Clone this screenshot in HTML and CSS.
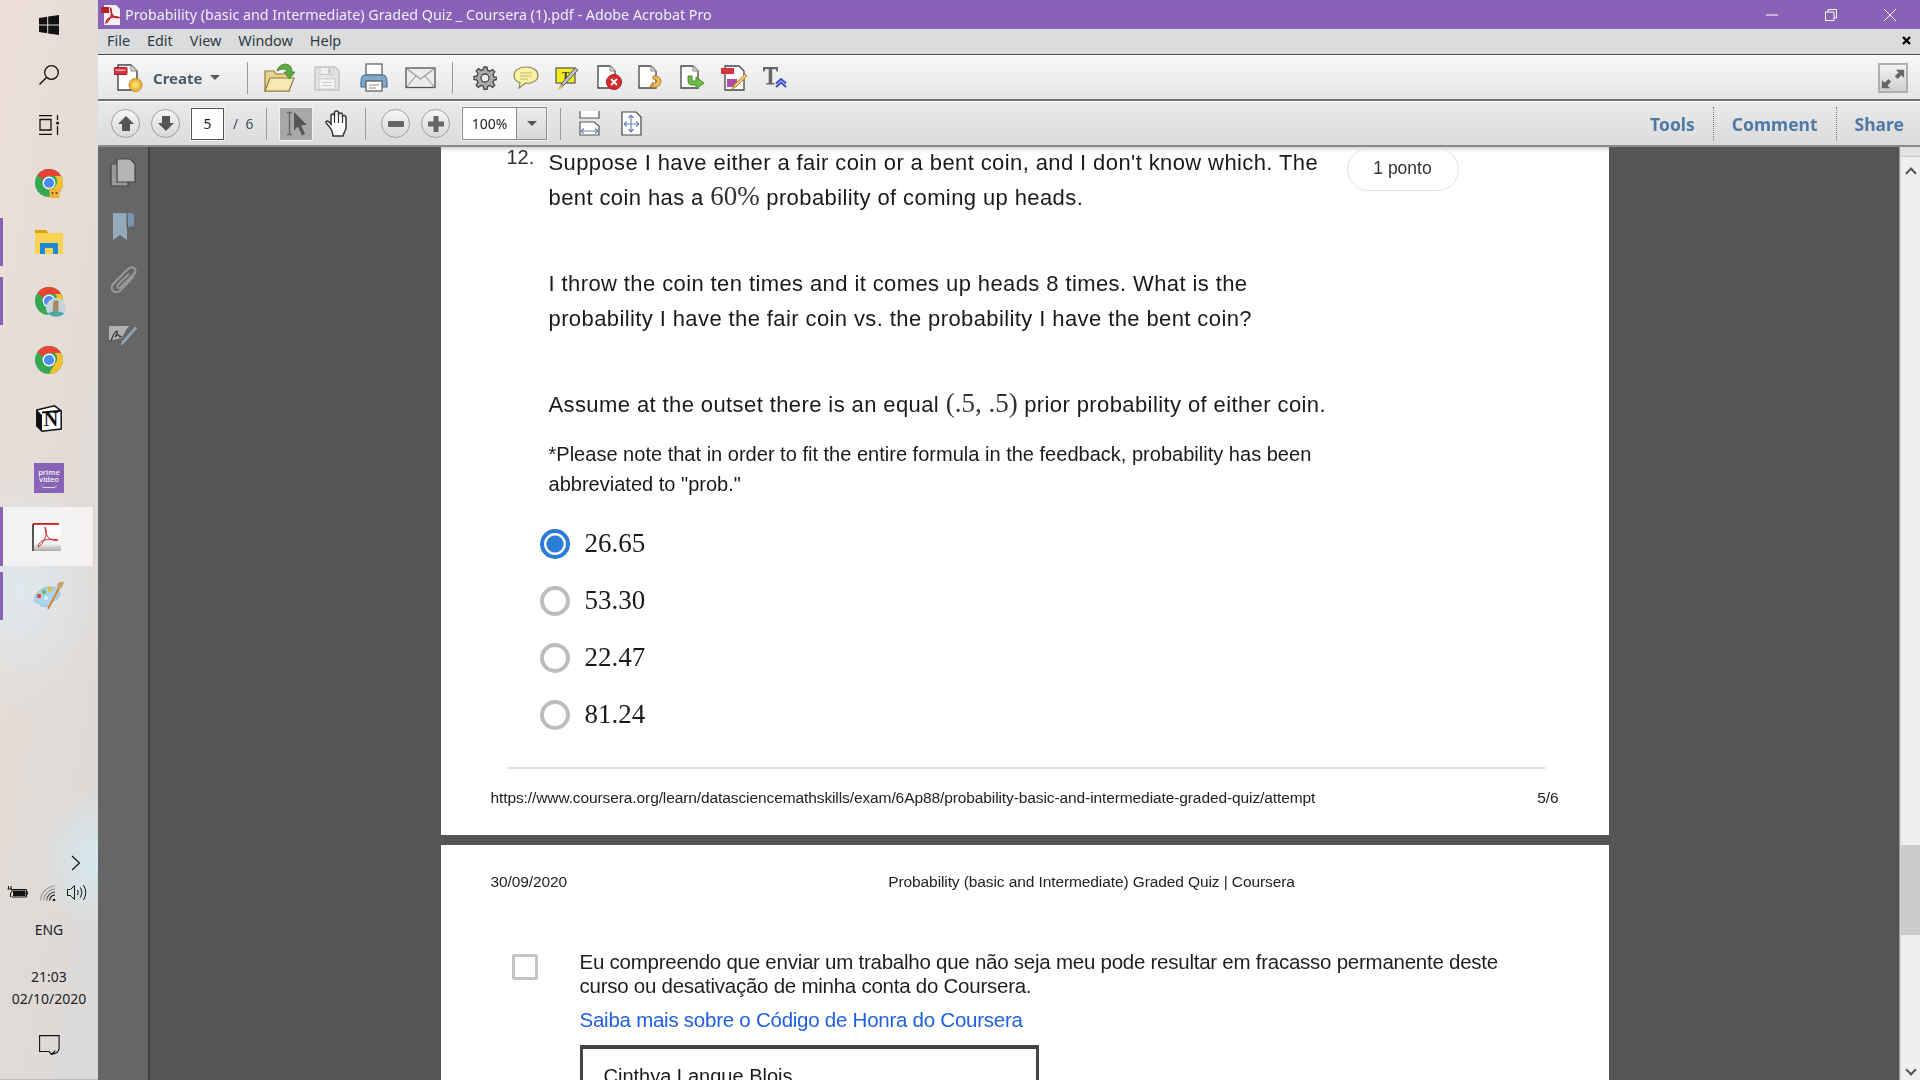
FILE: index.html
```html
<!DOCTYPE html>
<html lang="en">
<head>
<meta charset="utf-8">
<title>Probability (basic and Intermediate) Graded Quiz _ Coursera (1).pdf - Adobe Acrobat Pro</title>
<link rel="stylesheet" href="styles.css">
</head>
<body>
<div class="screen">
  <aside class="taskbar">
    <div class="sys-item"><svg width="20" height="20" viewBox="0 0 20 20"><path fill="#111" d="M0 3l8.200-1.200v7.600H0zM9.200 1.600L20 0v9.400H9.200zM0 10.600h8.200v7.600L0 17zM9.200 10.600H20V20L9.200 18.400z"/></svg></div>
    <div class="sys-item"><svg width="22" height="22" viewBox="0 0 22 22" fill="none" stroke="#111" stroke-width="1.300"><circle cx="13.500" cy="8.500" r="6.800"/><path d="M8.700 13.300L1.500 20.500"/></svg></div>
    <div class="sys-item"><svg width="22" height="20" viewBox="0 0 22 20" fill="none" stroke="#111" stroke-width="1.300"><path d="M1 .7h13M1 19.300h13M2 4.500h11v10.500H2zM19.500 0v5M19.500 11v9"/><rect x="18.300" y="6.800" width="2.600" height="2.600" fill="#111" stroke="none"/></svg></div>
    <div class="tasks">
      <div class="app"><svg width="32" height="32" viewBox="-2 -2 32 32"><circle cx="14" cy="14" r="14" fill="#34a853"/><path d="M14 0a14 14 0 0 1 12.100 7H14a7 7 0 0 0-6.300 4L2.600 5.800A14 14 0 0 1 14 0z" fill="#ea4335"/><path d="M26.100 7A14 14 0 0 1 14 28l6-10.500A7 7 0 0 0 20 7z" fill="#fbc02d"/><circle cx="14" cy="14" r="6.400" fill="#fff"/><circle cx="14" cy="14" r="5.100" fill="#4a8bf5"/><path d="M15 29l-1-11 3 2h5l3-2-.5 11z" fill="#f2b33d"/><circle cx="17.500" cy="24" r="1" fill="#5b3a1a"/><circle cx="21.500" cy="24" r="1" fill="#5b3a1a"/></svg></div>
      <div class="app"><svg width="28" height="24" viewBox="0 0 28 24"><path d="M0 0h11l2.500 3H0z" fill="#d9a300"/><path d="M0 3h28v21H0z" fill="#fbd354"/><path d="M5 13h18v11h-5v-6h-8v6H5z" fill="#1e88d8"/></svg></div>
      <div class="app"><svg width="36" height="36" viewBox="-4 -4 36 36"><circle cx="14" cy="14" r="14" fill="#34a853"/><path d="M14 0a14 14 0 0 1 12.100 7H14a7 7 0 0 0-6.300 4L2.600 5.800A14 14 0 0 1 14 0z" fill="#ea4335"/><path d="M26.100 7A14 14 0 0 1 14 28l6-10.500A7 7 0 0 0 20 7z" fill="#fbc02d"/><circle cx="14" cy="14" r="6.400" fill="#fff"/><circle cx="14" cy="14" r="5.100" fill="#4a8bf5"/><circle cx="21" cy="21" r="10" fill="#c4d6dc"/><path d="M12.500 26.500q8-5 17 0-8 6-17 0z" fill="#4fa8a8"/><path d="M18.500 13.500h5v11h-6z" fill="#a78a60"/></svg></div>
      <div class="app"><svg width="28" height="28" viewBox="0 0 28 28"><circle cx="14" cy="14" r="14" fill="#34a853"/><path d="M14 0a14 14 0 0 1 12.100 7H14a7 7 0 0 0-6.300 4L2.600 5.800A14 14 0 0 1 14 0z" fill="#ea4335"/><path d="M26.100 7A14 14 0 0 1 14 28l6-10.500A7 7 0 0 0 20 7z" fill="#fbc02d"/><circle cx="14" cy="14" r="6.400" fill="#fff"/><circle cx="14" cy="14" r="5.100" fill="#4a8bf5"/></svg></div>
      <div class="app"><svg width="26" height="27" viewBox="0 0 26 27"><path d="M.8 5L18.500.8l6.700 5V24L6 26.200.8 21z" fill="#fff" stroke="#111" stroke-width="1.500"/><path d="M1 5l5 5v16l-5-5z" fill="#111"/><path d="M6 7.500L25 5.800" stroke="#111" stroke-width="2"/></svg><span class="notion-n">N</span></div>
      <div class="app"><div class="prime"><span>prime</span><span>video</span><i class="prime-smile"></i></div></div>
      <div class="app app-active"><svg width="29" height="28" viewBox="0 0 29 28"><defs><linearGradient id="acro" x1="0" y1="0" x2="0" y2="1"><stop offset="0" stop-color="#fff"/><stop offset=".72" stop-color="#f7f7f7"/><stop offset="1" stop-color="#a9a9a9"/></linearGradient></defs><rect x="0" y="1" width="29" height="27" rx="1" fill="url(#acro)"/><rect x="0" y="1" width="2" height="27" fill="#555"/><rect x="1" y="0" width="26" height="1.800" fill="#d01c1c"/><path d="M6 24c4-2 7-8 8-12 .8-3-.5-8-1-8 0 4 1.500 10 5 12 3 1.500 7 2 8 1-3-1-11-1-15 .5C8.500 18.500 6 21 6 24z" fill="none" stroke="#c9282c" stroke-width="1"/></svg></div>
      <div class="app"><svg width="30" height="29" viewBox="0 0 30 29"><path d="M1 16C3 9 11 5 19 6c6 1 8 5 6 9-2 5-6 4-8 8-2 3-6 3-10 2-1-3-2-3-4-3-3-1-3-4-2-6z" fill="#a8d4ec" stroke="#7cb0cc" stroke-width=".6"/><circle cx="5" cy="15" r="2.200" fill="#e04b3a"/><circle cx="10" cy="11" r="2.200" fill="#7ab648"/><circle cx="16" cy="8.500" r="2.200" fill="#f3ba2f"/><circle cx="12" cy="17" r="2" fill="#dcecf5"/><path d="M14 28L25 7" stroke="#e07f22" stroke-width="1.800"/><path d="M23 6q0-4 3-5 3-1 4 0-1 5-4 7z" fill="#c7a36e"/></svg></div>
    </div>
    <div class="tray">
      <div class="tray-arrow"><svg width="10" height="16" viewBox="0 0 10 16" fill="none" stroke="#111" stroke-width="1.200"><path d="M1 1l7.500 7L1 15"/></svg></div>
      <div class="tray-icons">
        <svg width="21" height="13" viewBox="0 0 21 13"><path d="M1.500 0v3M4 0v3M.5 3h4.500v3L3.500 7v4" fill="none" stroke="#111"/><path d="M4.500 3.500H19.500V11H4.500" fill="none" stroke="#111"/><rect x="6" y="4.500" width="12.500" height="5.500" fill="#111"/><rect x="20" y="5.500" width="1" height="3" fill="#111"/></svg>
        <svg width="16" height="16" viewBox="0 0 16 16" fill="none" stroke="#999" stroke-width="1.100"><path d="M.6 15.500A15 15 0 0 1 15 1"/><path d="M3.600 15.500A12 12 0 0 1 15 4"/><path d="M6.600 15.500A9 9 0 0 1 15 7" stroke="#444"/><path d="M9.600 15.500A6 6 0 0 1 15 10" stroke="#111"/><circle cx="14" cy="15" r="1.300" fill="#111" stroke="none"/></svg>
        <svg width="20" height="17" viewBox="0 0 20 17" fill="none" stroke="#111" stroke-width="1"><path d="M.5 5.500h3l4-4v14l-4-4h-3z"/><path d="M10.500 6q1.500 2.500 0 5M13.500 3.500q3 5 0 10M16.500 1q4.500 7.500 0 15"/></svg>
      </div>
      <div class="lang">ENG</div>
      <div class="clock"><span>21:03</span><span>02/10/2020</span></div>
      <div class="notif"><svg width="21" height="20" viewBox="0 0 21 20" fill="none" stroke="#111" stroke-width="1.100"><path d="M.6.600h19.500v13q-1 5-7 5.500h-1l-2-2.600H.6z"/><path d="M12 19q3-.5 4-3.500"/></svg></div>
    </div>
  </aside>

  <div class="window">
    <header class="titlebar">
      <svg class="title-icon" width="20" height="20" viewBox="0 0 20 20"><path d="M3 0h12l4 4v16H3z" fill="#f6f0ee"/><rect x="0" y="2" width="8" height="6" fill="#b5202a"/><path d="M5 18c3-2 5-6 5.500-9 .4-2-.5-6-1-6 0 3 1 7 4 9 2 1 4 1 5 .5-3-1-8-.5-10.500.5C6.500 14 5 16 5 18z" fill="none" stroke="#c0202a" stroke-width="1.300"/></svg>
      <span class="title-text">Probability (basic and Intermediate) Graded Quiz _ Coursera (1).pdf - Adobe Acrobat Pro</span>
      <div class="win-btns">
        <svg width="12" height="2" viewBox="0 0 12 2"><path d="M0 1h12" stroke="#fff" stroke-width="1"/></svg>
        <svg width="12" height="12" viewBox="0 0 12 12" fill="none" stroke="#fff" stroke-width="1"><path d="M.5 3h8.500v8.500H.5zM3 3V.5h8.500V9H9"/></svg>
        <svg width="12" height="12" viewBox="0 0 12 12" fill="none" stroke="#fff" stroke-width="1"><path d="M0 0l12 12M12 0L0 12"/></svg>
      </div>
    </header>

    <nav class="menubar">
      <span class="menu-item">File</span><span class="menu-item">Edit</span><span class="menu-item">View</span><span class="menu-item">Window</span><span class="menu-item">Help</span>
      <svg class="menu-close" width="9" height="9" viewBox="0 0 9 9"><path d="M1 1l7 7M8 1L1 8" stroke="#000" stroke-width="2.400"/></svg>
    </nav>

    <div class="toolbar">
      <div class="create">
        <svg width="30" height="30" viewBox="0 0 30 30"><path d="M4 2h13l6 6v19H4z" fill="#fff" stroke="#444" stroke-width="1.400"/><path d="M17 2v6h6" fill="#ddd" stroke="#888"/><rect x="0" y="4.500" width="13" height="7" rx="1" fill="#d8333c" stroke="#a01a20"/><rect x="1.500" y="6.500" width="10" height="1.500" fill="#f4b0b0"/><circle cx="21.500" cy="22" r="6.500" fill="#efb93a" stroke="#b98a1e"/><circle cx="21.500" cy="22" r="3.500" fill="#f8d56a"/></svg>
        <span class="create-label">Create</span>
        <i class="caret"></i>
      </div>
      <i class="sep"></i>
      <div class="tool-group tool-wide">
        <span class="tool"><svg width="31" height="30" viewBox="0 0 31 30"><path d="M1 8h9l2 3h13v17H1z" fill="#e8d48e" stroke="#8f7a3a" stroke-width="1.200"/><path d="M1 28l5-13h24l-5 13z" fill="#f6e8b4" stroke="#8f7a3a" stroke-width="1.200"/><path d="M13 8q2-7 9-7 6 1 6 8l3 0-5.500 7L20 9h3q0-3-3-3-4 0-7 2z" fill="#5cab3e" stroke="#3e7f28" stroke-width=".8"/></svg></span>
        <span class="tool"><svg width="26" height="26" viewBox="0 0 26 26"><path d="M1 2h20l4 4v19H1z" fill="#e4e4e4" stroke="#c4c4c4" stroke-width="1.400"/><rect x="6" y="2.500" width="13" height="7" fill="#f0f0f0" stroke="#c8c8c8"/><rect x="14" y="3.500" width="3" height="5" fill="#c8c8c8"/><rect x="5" y="14" width="16" height="10" fill="#f4f4f4" stroke="#ccc"/><path d="M8 17.500h10M8 20.500h10" stroke="#ccc"/></svg></span>
        <span class="tool"><svg width="28" height="29" viewBox="0 0 28 29"><rect x="6" y="1" width="16" height="11" fill="#fff" stroke="#555" stroke-width="1.200"/><path d="M1 20q0-8 4-8h18q4 0 4 8v4H1z" fill="#7fa8c9" stroke="#4d6f8e" stroke-width="1.200"/><rect x="6" y="18" width="16" height="10" fill="#fff" stroke="#555" stroke-width="1.200"/><path d="M9 22h10M9 25h7" stroke="#888"/></svg></span>
        <span class="tool"><svg width="31" height="22" viewBox="0 0 31 22"><rect x="1" y="1" width="29" height="19.500" fill="#ececec" stroke="#555" stroke-width="1.300"/><path d="M1.500 1.500L15.500 12l14-10.500M1.500 20L11 9M29.500 20L20 9" fill="none" stroke="#999" stroke-width="1.100"/></svg></span>
      </div>
      <i class="sep"></i>
      <div class="tool-group tool-narrow">
        <span class="tool"><svg width="24" height="24" viewBox="0 0 24 24"><path d="M12 1.500l2 .2.600 3 2.400 1 2.600-1.600 2.200 2.200L20 9l1 2.400 3 .6v2l-3 .6-1 2.400 1.800 2.700-2.200 2.200L17 20l-2.400 1-.6 3h-3l-.6-3L8 20l-2.700 1.800-2.200-2.200L5 17l-1-2.400-3-.6v-3l3-.6L5 8 3.200 5.300l2.200-2.200L8 4.900l2.400-1 .6-2.400z" fill="#aaa" stroke="#444" stroke-width="1.300" transform="translate(0 -.5)"/><circle cx="12" cy="12" r="4" fill="#eee" stroke="#444" stroke-width="1.300"/></svg></span>
        <span class="tool"><svg width="26" height="23" viewBox="0 0 26 23"><path d="M13 1C6 1 1 4.500 1 9.500c0 3.500 2.500 6 6 7.200L6 22l6-4.600c7 .5 13-3 13-8S20 1 13 1z" fill="#f8f3a3" stroke="#8b8b66" stroke-width="1.200"/><path d="M7 7h12M7 10h12M7 13h8" stroke="#bfb66a" stroke-width="1.100"/></svg></span>
        <span class="tool"><svg width="26" height="25" viewBox="0 0 26 25"><rect x="1" y="3" width="19" height="15" fill="#f4ec1f" stroke="#555" stroke-width="1.200"/><text class="mini-t" x="7" y="14">T</text><path d="M5 23l4-3 14-15-3-2L7 18z" fill="#c5c5c5" stroke="#555"/><path d="M3 25l2-5 4 2z" fill="#d7bd52"/></svg></span>
        <span class="tool"><svg width="25" height="25" viewBox="0 0 25 25"><path d="M1 1h12l5 5v17H1z" fill="#fff" stroke="#444" stroke-width="1.300"/><path d="M13 1v5h5" fill="#ddd" stroke="#888"/><circle cx="17" cy="17" r="7.500" fill="#d9282f" stroke="#a61b20"/><path d="M14 14l6 6M20 14l-6 6" stroke="#fff" stroke-width="1.800"/></svg></span>
        <span class="tool"><svg width="25" height="25" viewBox="0 0 25 25"><path d="M1 1h12l5 5v17H1z" fill="#fff" stroke="#444" stroke-width="1.300"/><path d="M13 1v5h5" fill="#ddd" stroke="#888"/><path d="M15 11q7-1 8 5 0 6-8 7v-3l-4 3 4-6v2q4-1 4-3 0-2-4-2z" fill="#f2b95c" stroke="#a87520" stroke-width=".9"/></svg></span>
        <span class="tool"><svg width="25" height="25" viewBox="0 0 25 25"><path d="M1 1h12l5 5v17H1z" fill="#fff" stroke="#444" stroke-width="1.300"/><path d="M13 1v5h5" fill="#ddd" stroke="#888"/><path d="M8 11v5q0 4 4 4h4v4l8-6-8-6v4h-3q-1 0-1-1v-4z" fill="#6fbc47" stroke="#3e8224" stroke-width=".9"/></svg></span>
        <span class="tool"><svg width="26" height="26" viewBox="0 0 26 26"><path d="M4 1h14l5 5v19H4z" fill="#fff" stroke="#444" stroke-width="1.300"/><rect x="0" y="3" width="13" height="6" fill="#d8333c"/><rect x="6" y="14" width="10" height="8" fill="#b04da0"/><path d="M11 24l3-5 10-10 2 2-10 10z" fill="#f2c774" stroke="#b98a3a"/></svg></span>
        <span class="tool"><svg width="24" height="23" viewBox="0 0 24 23"><path d="M0 1h15v4.500h-1.500L13 3.200H9.200V17h2.200v1.500H3.500V17h2.200V3.200H2L1.500 5.500H0z" fill="#666"/><path d="M13 21l5-4.500 5 4.500M13 17.500l5-4.500 5 4.500" fill="none" stroke="#3b4dc9" stroke-width="2"/></svg></span>
      </div>
      <button class="expand"><svg width="28" height="28" viewBox="0 0 28 28"><path d="M17 4h9v9l-3-3-4 4-3-3 4-4zM11 24H2v-9l3 3 4-4 3 3-4 4z" fill="#666"/></svg></button>
    </div>

    <div class="navbar">
      <div class="round-btn"><svg width="16" height="15" viewBox="0 0 16 15"><path d="M8 0l8 8h-4v7H4V8H0z" fill="#555"/></svg></div>
      <div class="round-btn"><svg width="16" height="15" viewBox="0 0 16 15"><path d="M8 15L0 7h4V0h8v7h4z" fill="#555"/></svg></div>
      <div class="page-input">5</div>
      <div class="page-total">/ &nbsp;6</div>
      <i class="sep"></i>
      <div class="select-tool"><svg width="26" height="27" viewBox="0 0 26 27"><path d="M4 2.500h5M4 24.500h5M6.500 2.500v22" fill="none" stroke="#666" stroke-width="1.400"/><path d="M11 2l13 13h-6l4 9-3 1.500-4-9-4 4z" fill="#555"/></svg></div>
      <div class="hand"><svg width="26" height="27" viewBox="0 0 26 27"><path d="M7 21Q5 17 2 14q-2-2 0-3 2 0 4 3V6q0-2 1.700-2T9.500 6V3q0-2 2-2t2 2v2q0-2 2-2t2 2v2q0-1.500 1.700-1.500T21 8v9q0 3-2 6l-1 3H8z" fill="#fff" stroke="#333" stroke-width="1.500"/><path d="M9.500 6v7M13.500 5v8M17.500 7v6" stroke="#333" stroke-width="1.200"/></svg></div>
      <i class="sep"></i>
      <div class="round-btn"><svg width="16" height="6" viewBox="0 0 16 6"><rect width="16" height="6" rx="1" fill="#666"/></svg></div>
      <div class="round-btn"><svg width="16" height="16" viewBox="0 0 16 16"><path d="M5.500 0h5v5.500H16v5h-5.500V16h-5v-5.500H0v-5h5.500z" fill="#666"/></svg></div>
      <div class="zoom-box"><span class="zoom-val">100%</span><span class="zoom-drop"><i class="caret"></i></span></div>
      <i class="sep"></i>
      <div class="fit"><svg width="21" height="25" viewBox="0 0 21 25"><path d="M1 0v7h19V0" fill="#fff" stroke="#555" stroke-width="1.200"/><path d="M1 11h14l5 4v9H1z" fill="#fff" stroke="#555" stroke-width="1.200"/><path d="M2 20h17M2 20l3-2.500M2 20l3 2.500M19 20l-3-2.500M19 20l-3 2.500" fill="none" stroke="#6d87bb" stroke-width="1.200"/></svg></div>
      <div class="fit"><svg width="21" height="25" viewBox="0 0 21 25"><path d="M1 1h14l5 5v18H1z" fill="#fff" stroke="#444" stroke-width="1.200"/><path d="M10 4v17M3 13h15M10 4L7.500 7M10 4l2.500 3M10 21l-2.500-3M10 21l2.500-3M3 13l3-2.500M3 13l3 2.500M18 13l-3-2.500M18 13l-3 2.500" fill="none" stroke="#6d87bb" stroke-width="1.200"/></svg></div>
      <div class="panes">
        <span class="pane">Tools</span><span class="pane">Comment</span><span class="pane">Share</span>
      </div>
    </div>

    <div class="workspace">
      <div class="sidepanel">
        <svg width="26" height="29" viewBox="0 0 26 29"><path d="M1 6h15l2 2v20H1z" fill="#999" stroke="#444" stroke-width="1.200"/><path d="M7 1h13l5 5v18H7z" fill="#b4b4b4" stroke="#444" stroke-width="1.200"/></svg>
        <svg width="22" height="28" viewBox="0 0 22 28"><path d="M1 1h14v27l-7-5-7 5z" fill="#95a9bd"/><path d="M15 1q7-1 7 3v10l-6 1z" fill="#7a94ac"/><path d="M15 1v15" stroke="#555"/></svg>
        <svg width="27" height="30" viewBox="0 0 27 30" fill="none" stroke="#999" stroke-width="2"><path d="M24 11L11 25q-4 4-8 1-3-4 1-8L18 4q3-3 6-1 3 3 0 6L11 22q-2 2-3 .5-1.500-1.500.5-3.500L19 9"/></svg>
        <svg class="side-sign" width="29" height="23" viewBox="0 0 29 23"><path d="M0 2h20l-3 4-4 8-9 2H0z" fill="#b0b0b0"/><path d="M2 17q3-9 6-10 1 2-2 6 3-3 4-2 0 3 3 1" fill="none" stroke="#333" stroke-width="1.200"/><path d="M11 23l1-5 14-16 3 2-14 16z" fill="#8ea3b8" stroke="#555" stroke-width=".7"/></svg>
      </div>
      <main class="viewer">
        <section class="page page-one">
          <div class="question">
            <span class="q-num">12.</span>
            <div class="q-body">
              <p class="q-line">Suppose I have either a fair coin or a bent coin, and I don't know which. The</p>
              <p class="q-line">bent coin has a <span class="math">60%</span> probability of coming up heads.</p>
              <p class="q-line q-para">I throw the coin ten times and it comes up heads 8 times. What is the</p>
              <p class="q-line">probability I have the fair coin vs. the probability I have the bent coin?</p>
              <p class="q-line q-para">Assume at the outset there is an equal <span class="math">(.5, .5)</span> prior probability of either coin.</p>
              <p class="q-note">*Please note that in order to fit the entire formula in the feedback, probability has been abbreviated to "prob."</p>
            </div>
            <span class="points">1 ponto</span>
          </div>
          <div class="options">
            <div class="option"><i class="radio radio-on"></i><span>26.65</span></div>
            <div class="option"><i class="radio"></i><span>53.30</span></div>
            <div class="option"><i class="radio"></i><span>22.47</span></div>
            <div class="option"><i class="radio"></i><span>81.24</span></div>
          </div>
          <hr class="rule">
          <div class="pdf-foot"><span>https://www.coursera.org/learn/datasciencemathskills/exam/6Ap88/probability-basic-and-intermediate-graded-quiz/attempt</span><span>5/6</span></div>
        </section>
        <section class="page page-two">
          <div class="pdf-head"><span class="pdf-date">30/09/2020</span><span class="pdf-title">Probability (basic and Intermediate) Graded Quiz | Coursera</span></div>
          <div class="honor">
            <i class="check"></i>
            <div class="honor-body">
              <p class="honor-text">Eu compreendo que enviar um trabalho que não seja meu pode resultar em fracasso permanente deste curso ou desativação de minha conta do Coursera.</p>
              <p class="honor-link">Saiba mais sobre o Código de Honra do Coursera</p>
              <div class="name-box">Cinthya Langue Blois</div>
            </div>
          </div>
        </section>
      </main>
      <div class="scrollbar">
        <i class="scroll-cap"></i>
        <i class="scroll-up"></i>
        <i class="scroll-thumb"></i>
        <i class="scroll-down"></i>
      </div>
    </div>
  </div>
</div>
</body>
</html>
```
FILE: styles.css
```css
* { box-sizing: border-box; }
html, body { margin: 0; height: 100%; overflow: hidden; }
p { margin: 0; }
i { display: block; }

.screen { display: flex; width: 1920px; height: 1080px; font-family: "Noto Sans", sans-serif; color: #111; filter: blur(.35px); }

/* Windows taskbar */
.taskbar {
  width: 98px; flex: none; display: flex; flex-direction: column;
  background:
    radial-gradient(60px 70px at 100% 860px, #d5e8ee 0, rgba(213,232,238,0) 100%),
    radial-gradient(90px 120px at 20% 590px, #dfe8ee 0, rgba(223,232,238,0) 100%),
    linear-gradient(100deg, #ecdfd8 0, #e2dbd6 55%, #d9d9d9 100%);
  border-bottom: 1px solid #bdbdbd;
}
.sys-item { height: 50px; display: flex; align-items: center; justify-content: center; }
.tasks { margin-top: 3px; }
.app { position: relative; height: 59px; display: flex; align-items: center; justify-content: center; }
.app:nth-child(1)::before, .app:nth-child(4)::before, .app:nth-child(5)::before, .app:nth-child(6)::before { display: none; }
.app::before { content: ""; position: absolute; left: 0; top: 6px; bottom: 5px; width: 3px; background: #8762b6; }
.app-active { background: linear-gradient(90deg, #f1f2f4, #f5f2f0); border-right: 1px solid #d0d0d0; margin-right: 4px; }
.app-active::before { top: 0; bottom: 0; }
.notion-n { position: absolute; left: 0; right: 0; top: 18px; text-align: center; font: bold 20px/24px "Liberation Serif", serif; color: #111; padding-left: 4px; }
.prime { width: 30px; height: 30px; background: #8762b6; color: #eee; display: flex; flex-direction: column; align-items: center; font: 600 7.500px/7.500px "Noto Sans", sans-serif; padding-top: 6px; }
.prime-smile { width: 16px; height: 4px; border-bottom: 1px solid #ddd; border-radius: 0 0 8px 8px; }
.tray { margin-top: auto; display: flex; flex-direction: column; align-items: center; padding-bottom: 24px; }
.tray-arrow { align-self: flex-end; margin-right: 17px; height: 16px; display: flex; }
.tray-icons { display: flex; width: 80px; justify-content: space-between; align-items: center; margin-top: 13px; height: 17px; margin-right: 4px; }
.lang { font-size: 14px; line-height: 20px; margin-top: 19px; color: #222; }
.clock { display: flex; flex-direction: column; align-items: center; font-size: 14px; line-height: 22px; margin-top: 26px; color: #222; }
.notif { margin-top: 25px; height: 20px; display: flex; }

/* Window */
.window { flex: 1; min-width: 0; display: flex; flex-direction: column; }
.titlebar { height: 29px; flex: none; background: #8762b6; display: flex; align-items: center; padding-left: 3px; color: #f3eef9; }
.title-icon { margin-right: 4px; }
.title-text { font-size: 14.300px; white-space: nowrap; }
.win-btns { margin-left: auto; display: flex; align-items: center; gap: 47px; padding-right: 24px; }

.menubar { height: 26px; flex: none; background: #dcdcdc; display: flex; align-items: center; padding: 0 0 2px 9px; border-bottom: 1px solid #4a4a4a; }
.menu-item { font-size: 14.400px; color: #2b3a44; margin-right: 17px; }
.menu-close { margin-left: auto; margin-right: 9px; }

.toolbar { height: 46px; flex: none; display: flex; align-items: center; background: linear-gradient(#f7f7f7, #e6e6e6); border-top: 1px solid #fff; border-bottom: 2px solid #707070; padding-left: 16px; }
.create { display: flex; align-items: center; width: 133px; }
.create-label { font: bold 15px "Noto Sans", sans-serif; color: #4a5a68; margin-left: 9px; }
.caret { width: 0; height: 0; border: 5px solid transparent; border-top: 5px solid #555; border-bottom: 0; }
.create .caret { margin-left: 8px; }
.sep { width: 1px; height: 32px; background: #9a9a9a; flex: none; }
.tool-group { display: flex; align-items: center; }
.tool { display: flex; align-items: center; justify-content: center; }
.tool-wide { margin: 0 8px; }
.tool-wide .tool { width: 47px; }
.tool-narrow { margin-left: 11px; }
.tool-narrow .tool { width: 41.500px; }
.mini-t { font: bold 11px "Liberation Serif", serif; fill: #333; }
.expand { margin-left: auto; margin-right: 12px; width: 30px; height: 30px; padding: 0; border: 2px solid #b0b0b0; background: linear-gradient(#f3f3f3, #cfcfcf); display: flex; }

.navbar { height: 46px; flex: none; display: flex; align-items: center; background: linear-gradient(#e9e9e9, #dcdcdc); border-top: 1px solid #fff; border-bottom: 2px solid #8a8a8a; padding-left: 13px; }
.round-btn { width: 29px; height: 29px; border-radius: 50%; border: 1px solid #9c9c9c; background: linear-gradient(#f6f6f6, #d8d8d8); display: flex; align-items: center; justify-content: center; margin-right: 11px; flex: none; }
.page-input { width: 33px; height: 32px; background: #fff; border: 1px solid #555; box-shadow: 0 0 0 1px #f2f2f2; font-size: 14px; line-height: 30px; text-align: center; color: #222; }
.page-total { font-size: 14px; color: #3c4a58; width: 42px; padding-left: 9px; white-space: nowrap; }
.select-tool { width: 34px; height: 34px; background: #a8a8a8; border: 1px solid #f2f2f2; display: flex; align-items: center; justify-content: center; margin-left: 12px; }
.hand { width: 26px; margin-left: 12px; margin-right: 14px; display: flex; }
.navbar .sep + .round-btn { margin-left: 15px; }
.zoom-box { width: 85px; height: 33px; display: flex; background: #fff; border: 1px solid #8a8a8a; box-shadow: 0 0 0 1px #f2f2f2; margin-left: 1px; margin-right: 12.500px; }
.zoom-val { width: 53px; font-size: 14px; line-height: 31px; text-align: center; color: #222; }
.zoom-drop { flex: 1; background: linear-gradient(#ededed, #d8d8d8); border-left: 1px solid #8a8a8a; display: flex; align-items: center; justify-content: center; }
.fit { width: 21px; display: flex; margin-left: 18px; margin-right: 3px; }
.fit + .fit { margin-left: 18px; }
.panes { margin-left: auto; display: flex; height: 34px; align-items: center; }
.pane { font: bold 17.500px/34px "Noto Sans", sans-serif; color: #5079a6; padding: 0 18px; border-left: 1px dotted #777; }
.pane:first-child { border-left: 0; }
.pane:last-child { padding-right: 16px; }

/* Workspace */
.workspace { flex: 1; min-height: 0; display: flex; }
.sidepanel { width: 52px; flex: none; background: #666; border-right: 2px solid #3f3f3f; display: flex; flex-direction: column; align-items: center; padding-top: 11px; gap: 25px; }
.side-sign { margin-top: 4px; }
.viewer { flex: 1; min-width: 0; background: #555; overflow: hidden; display: flex; flex-direction: column; align-items: center; gap: 10px; border-right: 1px solid #999; }
.page { width: 1168px; flex: none; background: #fff; font-family: "Liberation Sans", sans-serif; color: #1a1a1a; }
.page-one { height: 688px; padding: 0 66px; box-shadow: inset 0 6px 5px -5px #bbb; }
.question { display: flex; align-items: flex-start; }
.q-num { width: 42px; flex: none; font-size: 20px; line-height: 20px; color: #333; }
.q-body { width: 708px; }
.q-line { font-size: 22px; line-height: 35px; letter-spacing: .4px; white-space: nowrap; }
.q-line:first-child { line-height: 31px; margin-bottom: 2px; }
.q-para { margin-top: 51px; }
.math { font-family: "Liberation Serif", serif; font-size: 27px; letter-spacing: 0; color: #333; line-height: 1; }
.q-note { font-size: 20.050px; line-height: 30px; margin-top: 17px; width: 780px; }
.points { width: 112px; height: 43px; margin: 1px 0 0 90px; border: 1px solid #e2e2e2; border-radius: 22px; font-size: 17.500px; line-height: 38px; text-align: center; flex: none; color: #333; white-space: nowrap; }
.options { margin: 16px 0 0 32px; }
.option { height: 57px; display: flex; align-items: center; font: 27px "Liberation Serif", serif; color: #1a1a1a; }
.radio { width: 30px; height: 30px; border-radius: 50%; border: 4px solid #bdbdbd; margin-right: 15px; margin-left: 1px; }
.radio-on { border-color: #2b7bd8; background: radial-gradient(circle, #2b7bd8 0 8px, #fff 9px); }
.rule { margin: 24px -3px 0 0; border: 0; border-top: 2px solid #e4e4e4; }
.pdf-foot { display: flex; justify-content: space-between; margin: 19px -16px 0 -16px; font-size: 15.500px; line-height: 20px; letter-spacing: -.1px; color: #222; }
.page-two { height: 500px; padding: 27px 50px 0; }
.pdf-head { position: relative; font-size: 15.500px; line-height: 20px; color: #222; text-align: center; letter-spacing: -.1px; }
.pdf-date { position: absolute; left: 0; top: 0; }
.pdf-title { display: block; padding-left: 134px; }
.honor { display: flex; margin: 58px 0 0 21px; }
.check { width: 26px; height: 26px; border: 3px solid #c4c4c4; border-radius: 2px; flex: none; margin: 4px 42px 0 0; }
.honor-body { flex: 1; }
.honor-text { font-size: 20.500px; line-height: 24px; color: #1f1f1f; letter-spacing: -.25px; width: 935px; }
.honor-link { font-size: 20.500px; line-height: 24px; margin-top: 10px; color: #1f5fe0; letter-spacing: -.25px; }
.name-box { width: 459px; height: 60px; margin-top: 13px; border: 3px solid #444; border-top-width: 4px; padding: 15px 0 0 21px; font-size: 20px; line-height: 24px; }

.scrollbar { width: 20px; flex: none; background: #efefef; display: flex; flex-direction: column; align-items: center; border-left: 1px solid #d8d8d8; }
.scroll-cap { width: 100%; height: 10px; background: #e3e3e3; border-bottom: 1px solid #ccc; flex: none; }
.scroll-up, .scroll-down { width: 8px; height: 8px; border: solid #555; border-width: 2.500px 0 0 2.500px; transform: rotate(45deg); margin-top: 12px; flex: none; }
.scroll-thumb { width: 100%; height: 90px; background: #cbcbcb; margin-top: 668px; flex: none; }
.scroll-down { transform: rotate(225deg); margin-top: auto; margin-bottom: 6px; }
```
